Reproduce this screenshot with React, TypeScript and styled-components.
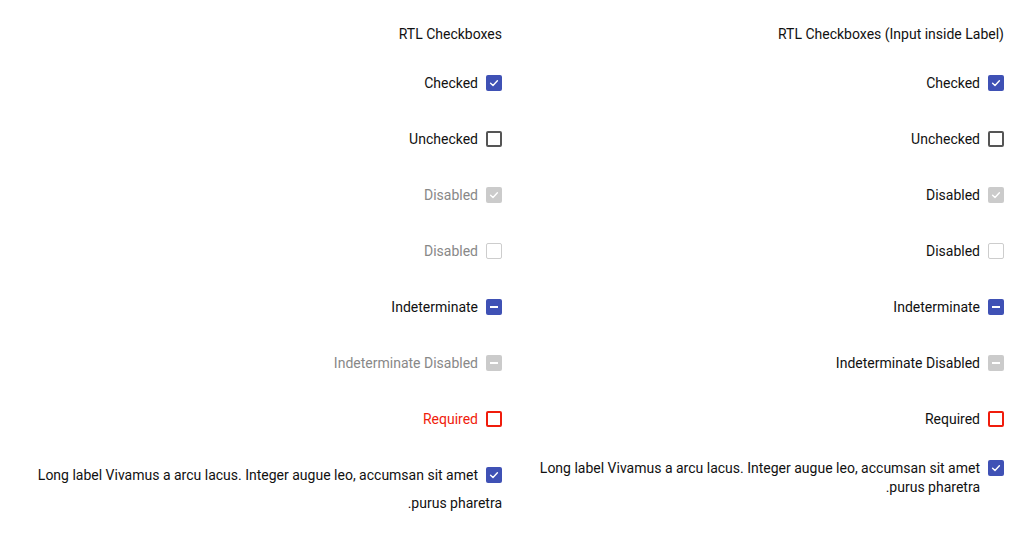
import styled, { createGlobalStyle } from 'styled-components';

const GlobalStyle = createGlobalStyle`
    body {
        margin: 0;
        background: #fff;
        font-family: Roboto, "Liberation Sans", sans-serif;
        font-size: 14px;
        color: #111;
    }
`

type State = 'checked' | 'unchecked' | 'indeterminate'
type Item = {
    label: string
    state: State
    disabled?: boolean
    required?: boolean
}

const items: Item[] = [
    { label: 'Checked', state: 'checked' },
    { label: 'Unchecked', state: 'unchecked' },
    { label: 'Disabled', state: 'checked', disabled: true },
    { label: 'Disabled', state: 'unchecked', disabled: true },
    { label: 'Indeterminate', state: 'indeterminate' },
    { label: 'Indeterminate Disabled', state: 'indeterminate', disabled: true },
    { label: 'Required', state: 'unchecked', required: true },
    { label: 'Long label Vivamus a arcu lacus. Integer augue leo, accumsan sit amet purus pharetra.', state: 'checked' },
]

const Page = styled.div`
    display: grid;
    grid-template-columns: 1fr 1fr;
    column-gap: 20px;
    padding: 24px 20px;
`
const Column = styled.section`
    display: flex;
    flex-direction: column;
    min-width: 0;
    direction: rtl;
`
const Title = styled.div`
    line-height: 20px;
    margin-bottom: 11px;
`
// inline flow row: the box sits at the line start and text wraps under it
const FlowRow = styled.div`
    padding: 14px 0;
    line-height: 28px;
`
const FlowLabel = styled.span<{ $disabled?: boolean; $required?: boolean }>`
    color: ${({ $disabled, $required }) => $disabled ? '#888' : $required ? '#f01c0c' : '#111'};
`
const FlexRow = styled.div<{ $long?: boolean }>`
    display: flex;
    align-items: center;
    min-height: 56px;
    padding-top: ${({ $long }) => $long ? '3px' : '0'};
`
const FlexLabel = styled.label`
    display: flex;
    align-items: flex-start;
    gap: 8px;
    line-height: 19px;
    color: #111;
`
const Box = styled.span<{ $state: State; $disabled?: boolean; $required?: boolean; $inline?: boolean }>`
    display: ${({ $inline }) => $inline ? 'inline-flex' : 'flex'};
    vertical-align: middle;
    align-items: center;
    justify-content: center;
    box-sizing: border-box;
    flex: none;
    width: 16px;
    height: 16px;
    margin-left: ${({ $inline }) => $inline ? '8px' : '0'};
    margin-top: ${({ $inline }) => $inline ? '-3px' : '1px'};
    border-radius: 2px;
    background: ${({ $state, $disabled }) => $state === 'unchecked' ? '#fff' : $disabled ? '#cbcbcb' : '#3f51b5'};
    border: ${({ $state, $disabled, $required }) => $state !== 'unchecked' ? 'none'
        : $disabled ? '1.5px solid #cdcdcd'
        : $required ? '2px solid #f01c0c'
        : '2px solid #555'};
`

function Mark({ state }: { state: State }) {
    if (state === 'checked') {
        return (
            <svg width="16" height="16" viewBox="0 0 16 16">
                <polyline points="4.6,8.2 7,10.5 11.4,5.8" fill="none" stroke="#fff" strokeWidth="1.4" strokeLinecap="round" strokeLinejoin="round" />
            </svg>
        )
    }
    if (state === 'indeterminate') {
        return (
            <svg width="16" height="16" viewBox="0 0 16 16">
                <rect x="4" y="7" width="8" height="2" fill="#fff" />
            </svg>
        )
    }
    return null
}

function App() {
    return (
        <>
            <GlobalStyle />
            <Page>
                <Column>
                    <Title>RTL Checkboxes</Title>
                    {items.map((it, i) => (
                        <FlowRow key={i}>
                            <Box $inline $state={it.state} $disabled={it.disabled} $required={it.required}>
                                <Mark state={it.state} />
                            </Box>
                            <FlowLabel $disabled={it.disabled} $required={it.required}>{it.label}</FlowLabel>
                        </FlowRow>
                    ))}
                </Column>
                <Column>
                    <Title>RTL Checkboxes (Input inside Label)</Title>
                    {items.map((it, i) => (
                        <FlexRow key={i} $long={it.label.length > 40}>
                            <FlexLabel>
                                <Box $state={it.state} $disabled={it.disabled} $required={it.required}>
                                    <Mark state={it.state} />
                                </Box>
                                <span>{it.label}</span>
                            </FlexLabel>
                        </FlexRow>
                    ))}
                </Column>
            </Page>
        </>
    )
}
export default App
